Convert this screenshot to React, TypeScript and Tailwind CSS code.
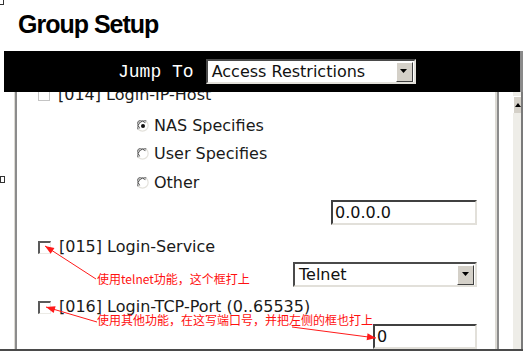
import React from "react";

const sans = "font-['DejaVu_Sans','Noto_Sans_CJK_SC',sans-serif]";

function Radio({ checked }: { checked?: boolean }) {
  return (
    <svg width="12" height="12" viewBox="0 0 12 12" className="shrink-0">
      <circle cx="6" cy="6" r="5.5" fill="#fff" />
      <path d="M1.5 9.5 A5 5 0 0 1 9.5 1.5" fill="none" stroke="#808080" strokeWidth="1.2" />
      <path d="M2.6 8.4 A3.6 3.6 0 0 1 8.4 2.6" fill="none" stroke="#404040" strokeWidth="1" />
      <path d="M9.5 1.5 A5 5 0 0 1 1.5 9.5" fill="none" stroke="#e4e2dc" strokeWidth="1.2" />
      {checked && <circle cx="6" cy="6" r="2" fill="#111" />}
    </svg>
  );
}

function Check({ light }: { light?: boolean }) {
  if (light)
    return <div className="w-[12px] h-[12px] border border-[#c4c4c4] bg-white shrink-0" />;
  return (
    <div className="w-[13px] h-[13px] shrink-0 bg-white border-t-2 border-l-2 border-t-[#5a5a5a] border-l-[#5a5a5a] border-b border-r border-b-[#ecebe6] border-r-[#ecebe6]" />
  );
}

function TextBox({ value, w }: { value: string; w: string }) {
  return (
    <div
      className={`${w} h-[25px] flex items-center pl-[2px] bg-white border-t-2 border-l-2 border-t-[#404040] border-l-[#404040] border-b-2 border-r-2 border-b-[#e2e0da] border-r-[#e2e0da] text-[16px] text-[#111]`}
    >
      {value}
    </div>
  );
}

function Select({ value, w }: { value: string; w: string }) {
  return (
    <div
      className={`${w} h-[25px] shrink-0 flex items-center bg-white border-t-2 border-l-2 border-t-[#4a4a4a] border-l-[#4a4a4a] border-b-2 border-r-2 border-b-[#e2e0da] border-r-[#e2e0da] text-[16px] text-[#111]`}
    >
      <span className="flex-1 pl-[4px] leading-none whitespace-nowrap">{value}</span>
      <div className="w-[17px] h-[20px] mr-[1px] bg-[#d4d0c8] border-t border-l border-t-white border-l-white border-b border-r border-b-[#404040] border-r-[#404040] flex items-center justify-center">
        <svg width="8" height="5" viewBox="0 0 8 5">
          <path d="M0 0 H7 L3.5 4 Z" fill="#000" />
        </svg>
      </div>
    </div>
  );
}

function arrowHead(x1: number, y1: number, x2: number, y2: number) {
  const dx = x2 - x1;
  const dy = y2 - y1;
  const len = Math.hypot(dx, dy);
  const ux = dx / len;
  const uy = dy / len;
  const bx = x2 - ux * 9;
  const by = y2 - uy * 9;
  const px = -uy * 3.5;
  const py = ux * 3.5;
  return `${x2},${y2} ${bx + px},${by + py} ${bx - px},${by - py}`;
}

const arrows = [
  [96, 279, 45, 246],
  [97, 322, 46, 307],
  [292, 327, 376, 338],
];

export default function App() {
  return (
    <div className={`relative w-[525px] h-[354px] bg-white overflow-hidden ${sans}`}>
      <div className="absolute left-0 top-0 w-[4px] h-[5px] border-r border-b border-[#333]" />

      <div className="h-[51px] pl-[18px] pt-[12px]">
        <h1 className="font-['Liberation_Sans',Arial,sans-serif] font-bold text-[25px] leading-none tracking-[-1px] text-black">
          Group Setup
        </h1>
      </div>

      <div className="flex h-[41px]">
        <div className="w-[4px] shrink-0" />
        <div className="w-[516px] shrink-0 bg-black flex items-center pl-[114px]">
          <span className="font-['Liberation_Mono',monospace] text-[18px] text-white leading-none mr-[12px] whitespace-nowrap">
            Jump To
          </span>
          <Select value="Access Restrictions" w="w-[210px]" />
        </div>
        <div className="w-[3px] shrink-0 bg-[#8a8a8a]" />
      </div>

      <div className="flex h-[257px] w-[525px]">
        <div className="w-[14px] shrink-0 flex flex-col">
          <div className="mt-[84px] w-[5px] h-[7px] border border-[#333]" />
        </div>
        <div className="w-[1px] shrink-0 bg-[#dcdad4]" />
        <div className="w-[2px] shrink-0 bg-[#8c8c8c]" />

        <div className="w-[478px] shrink-0 overflow-hidden text-[16px] text-[#1a1a1a] whitespace-nowrap">
          <div className="mt-[-5px] h-[16px] flex items-center pl-[21px] gap-[8px] leading-none">
            <Check light />
            <span>[014] Login-IP-Host</span>
          </div>

          <div className="mt-[13px] h-[20px] flex items-center pl-[120px] gap-[5px]">
            <Radio checked />
            <span>NAS Specifies</span>
          </div>
          <div className="mt-[8px] h-[20px] flex items-center pl-[120px] gap-[5px]">
            <Radio />
            <span>User Specifies</span>
          </div>
          <div className="mt-[9px] h-[20px] flex items-center pl-[120px] gap-[5px]">
            <Radio />
            <span>Other</span>
          </div>

          <div className="mt-[7px] pl-[314px]">
            <TextBox value="0.0.0.0" w="w-[146px]" />
          </div>

          <div className="mt-[14px] h-[16px] flex items-center pl-[21px] gap-[8px]">
            <Check />
            <span>[015] Login-Service</span>
          </div>

          <div className="mt-[7px] pl-[276px]">
            <Select value="Telnet" w="w-[184px]" />
          </div>

          <div className="mt-[12px] h-[16px] flex items-center pl-[21px] gap-[8px]">
            <Check />
            <span>[016] Login-TCP-Port (0..65535)</span>
          </div>

          <div className="mt-[9px] pl-[356px]">
            <TextBox value="0" w="w-[104px]" />
          </div>
        </div>

        <div className="w-[2px] shrink-0 bg-[#dcdad4]" />
        <div className="w-[2px] shrink-0 bg-[#8c8c8c]" />
        <div className="w-[14px] shrink-0" />
        <div className="w-[8px] shrink-0 bg-[#eeede8] flex flex-col">
          <div className="mt-[4px] h-[17px] bg-[#d4d0c8] border-t border-l border-white flex items-center justify-center">
            <svg width="6" height="4" viewBox="0 0 6 4">
              <path d="M3 0 L6 4 H0 Z" fill="#000" />
            </svg>
          </div>
        </div>
        <div className="w-[2px] shrink-0 bg-[#7a7a7a]" />
        <div className="flex-1" />
      </div>

      <div className="h-[2px] w-[523px] bg-[#4a4a4a]" />

      <svg className="absolute left-0 top-0" width="525" height="354">
        {arrows.map(([x1, y1, x2, y2], i) => (
          <g key={i}>
            <line x1={x1} y1={y1} x2={x2} y2={y2} stroke="#ff1a1a" strokeWidth="1" />
            <polygon points={arrowHead(x1, y1, x2, y2)} fill="#ff1a1a" />
          </g>
        ))}
      </svg>
      <div className="absolute left-[97px] top-[271px] text-[12px] leading-[16px] text-[#ff1010] whitespace-nowrap font-['Noto_Sans_CJK_SC',sans-serif]">
        使用telnet功能，这个框打上
      </div>
      <div className="absolute left-[97px] top-[312px] text-[12px] leading-[16px] text-[#ff1010] whitespace-nowrap font-['Noto_Sans_CJK_SC',sans-serif]">
        使用其他功能，在这写端口号，并把左侧的框也打上
      </div>
    </div>
  );
}
